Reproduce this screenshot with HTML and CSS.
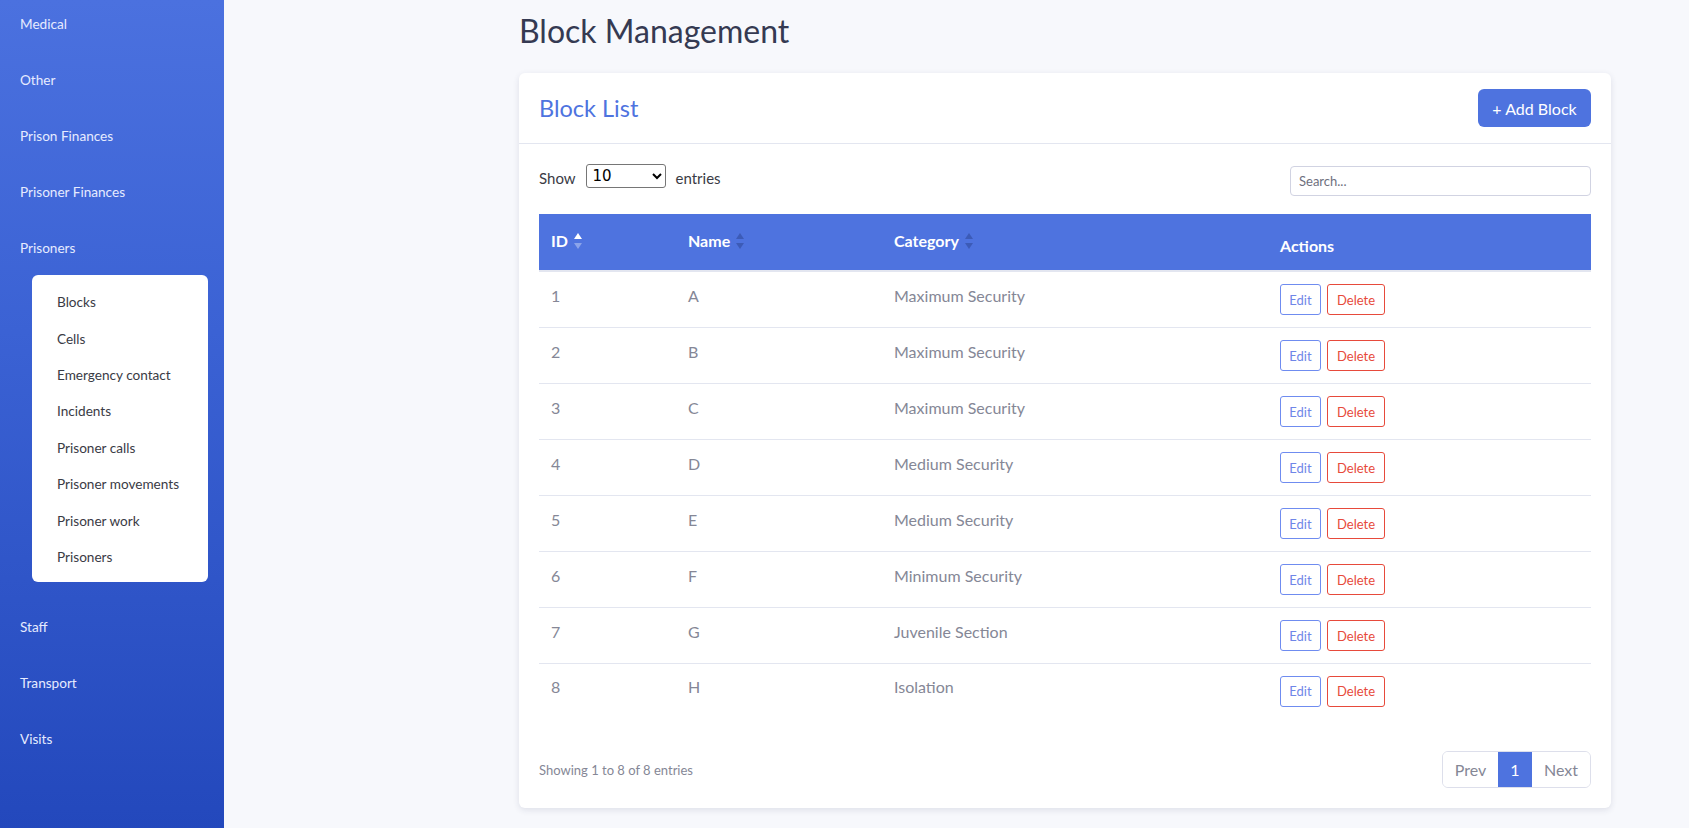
FILE: index.html
```html
<!DOCTYPE html>
<html lang="en">
<head>
<meta charset="utf-8">
<title>Block Management</title>
<link rel="stylesheet" href="styles.css">
</head>
<body>
<div class="layout">
  <aside class="sidebar">
    <nav class="nav">
      <a class="nav-item">Medical</a>
      <a class="nav-item">Other</a>
      <a class="nav-item">Prison Finances</a>
      <a class="nav-item">Prisoner Finances</a>
      <a class="nav-item">Prisoners</a>
      <div class="submenu">
        <a class="sub-item">Blocks</a>
        <a class="sub-item">Cells</a>
        <a class="sub-item">Emergency contact</a>
        <a class="sub-item">Incidents</a>
        <a class="sub-item">Prisoner calls</a>
        <a class="sub-item">Prisoner movements</a>
        <a class="sub-item">Prisoner work</a>
        <a class="sub-item">Prisoners</a>
      </div>
      <a class="nav-item">Staff</a>
      <a class="nav-item">Transport</a>
      <a class="nav-item">Visits</a>
    </nav>
  </aside>
  <main class="main">
    <h1 class="page-title">Block Management</h1>
    <section class="card">
      <header class="card-header">
        <h2 class="card-title">Block List</h2>
        <button class="btn-primary">+ Add Block</button>
      </header>
      <div class="card-body">
        <div class="controls">
          <label class="length">Show
            <select class="length-select">
              <option>10</option>
              <option>25</option>
              <option>50</option>
            </select>
            entries</label>
          <input class="search" type="text" placeholder="Search...">
        </div>
        <table class="table">
          <colgroup>
            <col class="c-id"><col class="c-name"><col class="c-cat"><col class="c-act">
          </colgroup>
          <thead>
            <tr>
              <th class="th-sort"><span class="th-label">ID</span><span class="sort"><span class="arr up on"></span><span class="arr down dim"></span></span></th>
              <th class="th-sort"><span class="th-label">Name</span><span class="sort"><span class="arr up"></span><span class="arr down"></span></span></th>
              <th class="th-sort"><span class="th-label">Category</span><span class="sort"><span class="arr up"></span><span class="arr down"></span></span></th>
              <th class="th-plain">Actions</th>
            </tr>
          </thead>
          <tbody>
            <tr><td>1</td><td>A</td><td>Maximum Security</td><td><span class="actions"><button class="btn-edit">Edit</button><button class="btn-del">Delete</button></span></td></tr>
            <tr><td>2</td><td>B</td><td>Maximum Security</td><td><span class="actions"><button class="btn-edit">Edit</button><button class="btn-del">Delete</button></span></td></tr>
            <tr><td>3</td><td>C</td><td>Maximum Security</td><td><span class="actions"><button class="btn-edit">Edit</button><button class="btn-del">Delete</button></span></td></tr>
            <tr><td>4</td><td>D</td><td>Medium Security</td><td><span class="actions"><button class="btn-edit">Edit</button><button class="btn-del">Delete</button></span></td></tr>
            <tr><td>5</td><td>E</td><td>Medium Security</td><td><span class="actions"><button class="btn-edit">Edit</button><button class="btn-del">Delete</button></span></td></tr>
            <tr><td>6</td><td>F</td><td>Minimum Security</td><td><span class="actions"><button class="btn-edit">Edit</button><button class="btn-del">Delete</button></span></td></tr>
            <tr><td>7</td><td>G</td><td>Juvenile Section</td><td><span class="actions"><button class="btn-edit">Edit</button><button class="btn-del">Delete</button></span></td></tr>
            <tr><td>8</td><td>H</td><td>Isolation</td><td><span class="actions"><button class="btn-edit">Edit</button><button class="btn-del">Delete</button></span></td></tr>
          </tbody>
        </table>
        <div class="footer">
          <span class="info">Showing 1 to 8 of 8 entries</span>
          <div class="pager">
            <button class="pg pg-prev">Prev</button>
            <button class="pg pg-cur">1</button>
            <button class="pg pg-next">Next</button>
          </div>
        </div>
      </div>
    </section>
  </main>
</div>
</body>
</html>
```

FILE: styles.css
```css
* { box-sizing: border-box; }
html, body { margin: 0; padding: 0; }
body {
  font-family: Lato, "Open Sans", sans-serif;
  background: #f7f8fc;
  color: #3a3b45;
  width: 1689px;
  height: 828px;
  overflow: hidden;
}
.layout { display: flex; height: 828px; }

.sidebar {
  width: 224px;
  flex: 0 0 224px;
  background: linear-gradient(180deg, #4b71df 0%, #3b62d4 40%, #2348bc 100%);
  overflow: hidden;
}
.nav { display: flex; flex-direction: column; margin-top: -4px; }
.nav-item {
  height: 56px;
  display: flex;
  align-items: center;
  padding-left: 20px;
  font-size: 13.6px;
  color: #e6ebff;
}
.submenu {
  margin: -1px 16px 17px 32px;
  background: #fff;
  border-radius: 6px;
  padding: 9px 0 7px;
  display: flex;
  flex-direction: column;
}
.sub-item {
  height: 36.4px;
  display: flex;
  align-items: center;
  padding-left: 25px;
  font-size: 13.6px;
  color: #3a3b45;
}

.main { flex: 1; padding-left: 295px; }
.page-title {
  margin: 11px 0 23px;
  font-size: 32px;
  line-height: 39px;
  font-weight: 400;
  color: #353a52;
}
.card {
  width: 1092px;
  background: #fff;
  border-radius: 6px;
  box-shadow: 0 2px 6px rgba(40, 50, 90, 0.12);
}
.card-header {
  display: flex;
  align-items: center;
  justify-content: space-between;
  padding: 16px 20px;
  border-bottom: 1px solid #e3e6f0;
}
.card-title {
  margin: 0;
  font-size: 23.5px;
  font-weight: 400;
  color: #4e73df;
}
.btn-primary {
  height: 38px;
  width: 113px;
  border: none;
  border-radius: 6px;
  background: #4e73df;
  color: #fff;
  font-family: inherit;
  font-size: 16px;
}
.card-body { padding: 20px 20px 20px; }
.controls {
  display: flex;
  justify-content: space-between;
  align-items: flex-start;
  height: 32px;
  margin-bottom: 18px;
}
.length {
  display: flex;
  align-items: center;
  gap: 10px;
  height: 28px;
  font-size: 15px;
  color: #3a3b45;
}
.length-select {
  margin-top: -4px;
  width: 80px;
  height: 24px;
  font-family: "DejaVu Sans", sans-serif;
  font-size: 15px;
  border: 1px solid #767676;
  border-radius: 3px;
  background: #fff;
  color: #000;
  padding: 0 2px;
}
.search {
  margin-top: 2px;
  width: 301px;
  height: 30px;
  border: 1px solid #d1d3e2;
  border-radius: 4px;
  padding: 0 8px;
  font-family: inherit;
  font-size: 13px;
  color: #3a3b45;
}
.search::placeholder { color: #6e707e; }

.table {
  width: 100%;
  border-collapse: collapse;
  table-layout: fixed;
}
.c-id { width: 137px; }
.c-name { width: 206px; }
.c-cat { width: 386px; }
.c-act { width: 323px; }
thead tr { background: #4e73df; }
th {
  height: 57px;
  padding: 0 12px;
  text-align: left;
  color: #fff;
  font-size: 16px;
  font-weight: 700;
  border-bottom: 2px solid #e3e6f0;
}
.th-sort { vertical-align: top; padding-top: 15px; }
.th-sort .th-label, .th-sort .sort { vertical-align: middle; }
.th-plain { vertical-align: top; padding-top: 22px; }
.sort {
  display: inline-flex;
  flex-direction: column;
  gap: 4px;
  margin-left: 6px;
}
.arr { width: 0; height: 0; border-left: 4.5px solid transparent; border-right: 4.5px solid transparent; }
.arr.up { border-bottom: 6px solid rgba(30, 45, 110, 0.35); }
.arr.down { border-top: 6px solid rgba(30, 45, 110, 0.35); }
.arr.up.on { border-bottom-color: #fff; }
.arr.down.dim { border-top-color: rgba(255, 255, 255, 0.35); }

td {
  height: 56px;
  padding: 0 12px 8px;
  font-size: 16px;
  color: #858796;
  border-bottom: 1px solid #e3e6f0;
  vertical-align: middle;
}
tbody tr:last-child td { border-bottom: none; height: 55px; }
td:last-child { padding-bottom: 0; padding-top: 1px; }
.actions { display: flex; gap: 6px; }
.btn-edit, .btn-del {
  height: 31px;
  background: #fff;
  border-radius: 3px;
  font-family: inherit;
  font-size: 13px;
  padding: 0;
}
.btn-edit { width: 41px; border: 1px solid #6f8cf0; color: #6f86e8; }
.btn-del { width: 58px; border: 1px solid #e74a3b; color: #e74a3b; }

.footer {
  display: flex;
  justify-content: space-between;
  align-items: center;
  margin-top: 33px;
}
.info { font-size: 13px; color: #858796; }
.pager {
  display: flex;
  height: 37px;
  border: 1px solid #dddfeb;
  border-radius: 6px;
  overflow: hidden;
}
.pg {
  border: none;
  background: #fff;
  font-family: inherit;
  font-size: 16px;
  color: #858796;
  padding: 0;
}
.pg-prev { width: 55px; }
.pg-cur { width: 34px; background: #4e73df; color: #fff; }
.pg-next { width: 58px; }
```
